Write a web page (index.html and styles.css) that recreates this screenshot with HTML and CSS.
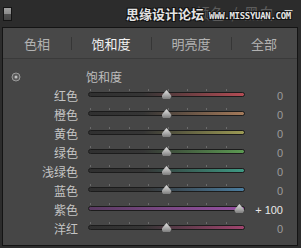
FILE: index.html
```html
<!DOCTYPE html>
<html lang="zh-CN">
<head>
    <meta charset="UTF-8">
    <title>HSL 饱和度</title>
    <link rel="stylesheet" href="styles.css">
</head>
<body>

<div class="top">
    <div class="switch"></div>
    <div class="crumbs">颜色 &nbsp;/ &nbsp;黑白</div>
    <div class="arrow">▼</div>
    <div class="mark">
        <span class="mark-cn">思缘设计论坛</span>
        <span class="mark-en">WWW.MISSYUAN.COM</span>
    </div>
</div>

<div class="panel">
    <div class="tabs">
        <div class="tab">色相</div>
        <div class="tab active">饱和度</div>
        <div class="tab">明亮度</div>
        <div class="tab">全部</div>
    </div>

    <div class="sliders">
        <div class="target">
            <svg width="10" height="10" viewBox="0 0 10 10">
                <circle cx="5" cy="5" r="4" fill="#5a5a5a" stroke="#9a9a9a" stroke-width="1"/>
                <circle cx="5" cy="5" r="1.5" fill="#c0c0c0"/>
            </svg>
        </div>
        <div class="heading">饱和度</div>
        <div></div>

        <div class="label">红色</div>
        <div class="track red"><span class="thumb" style="left: 50%"></span></div>
        <div class="value">0</div>

        <div class="label">橙色</div>
        <div class="track orange"><span class="thumb" style="left: 50%"></span></div>
        <div class="value">0</div>

        <div class="label">黄色</div>
        <div class="track yellow"><span class="thumb" style="left: 50%"></span></div>
        <div class="value">0</div>

        <div class="label">绿色</div>
        <div class="track green"><span class="thumb" style="left: 50%"></span></div>
        <div class="value">0</div>

        <div class="label">浅绿色</div>
        <div class="track aqua"><span class="thumb" style="left: 50%"></span></div>
        <div class="value">0</div>

        <div class="label">蓝色</div>
        <div class="track blue"><span class="thumb" style="left: 50%"></span></div>
        <div class="value">0</div>

        <div class="label">紫色</div>
        <div class="track purple"><span class="thumb" style="left: 97%"></span></div>
        <div class="value changed">+ 100</div>

        <div class="label">洋红</div>
        <div class="track magenta"><span class="thumb" style="left: 50%"></span></div>
        <div class="value">0</div>
    </div>
</div>

</body>
</html>
```

FILE: styles.css
```css
body {
    margin: 0;
    width: 301px;
    height: 248px;
    overflow: hidden;
    background: #2c2c2c;
    font-family: "Noto Sans CJK SC", "Noto Sans", sans-serif;
}

/* header strip */
.top {
    position: relative;
    height: 27px;
    display: flex;
    align-items: center;
}
.switch {
    width: 7px;
    height: 12px;
    margin-left: 3px;
    border: 1px solid #151515;
    background: linear-gradient(#a0a0a0 0%, #8a8a8a 50%, #505050 50%, #444 100%);
}
.crumbs {
    margin-left: auto;
    align-self: flex-start;
    margin-top: 4px;
    color: #5c5c5c;
    font-size: 15px;
    line-height: 17px;
}
.arrow {
    margin: 0 8px 0 10px;
    color: #cfcfcf;
    font-size: 9px;
    line-height: 9px;
}
.mark {
    position: absolute;
    left: 126px;
    top: 6px;
    display: flex;
    align-items: flex-end;
    gap: 5px;
    color: #e4e4e4;
    text-shadow: 1px 1px 0 #111, -1px -1px 0 #111, 1px -1px 0 #111, -1px 1px 0 #111;
}
.mark-cn {
    font-size: 13px;
    font-weight: bold;
    line-height: 16px;
}
.mark-en {
    font-family: "DejaVu Sans Mono", monospace;
    font-size: 9px;
    font-weight: bold;
    line-height: 11px;
    letter-spacing: -0.3px;
}

/* panel */
.panel {
    margin-left: 2px;
    width: 294px;
    height: 217px;
    border: 1px solid #141414;
    background: #464646;
}
.tabs {
    display: grid;
    grid-template-columns: 68px 80px 80px 1fr;
    height: 30px;
    background: #484848;
    border-bottom: 1px solid #3a3a3a;
}
.tab {
    display: flex;
    align-items: center;
    justify-content: center;
    color: #b2b2b2;
    font-size: 13px;
    position: relative;
}
.tab + .tab::before {
    content: "";
    position: absolute;
    left: 0;
    top: 9px;
    bottom: 8px;
    width: 1px;
    background: #363636;
}
.tab.active {
    color: #f2f2f2;
}

/* sliders */
.sliders {
    display: grid;
    grid-template-columns: 75px 157px 28px;
    grid-auto-rows: 19px;
    column-gap: 10px;
    align-items: center;
    padding-top: 8px;
}
.target {
    padding-left: 8px;
    height: 10px;
}
.target svg {
    display: block;
}
.heading {
    color: #bdbdbd;
    font-size: 12px;
    margin-left: -2px;
}
.label {
    text-align: right;
    color: #c4c4c4;
    font-size: 12px;
    line-height: 19px;
}
.value {
    text-align: right;
    color: #9c9c9c;
    font-family: "Liberation Sans", Arial, sans-serif;
    font-size: 11px;
}
.value.changed {
    color: #e8e8e8;
}

.track {
    position: relative;
    height: 3px;
    margin-top: -2px;
    border: 1px solid #1c1c1c;
    border-radius: 3px;
    background: linear-gradient(90deg, #303030 0%, #353535 35%, var(--hue) 100%);
}
.track::before {
    content: "";
    position: absolute;
    left: 1px;
    right: 1px;
    top: -4px;
    height: 2px;
    background: repeating-linear-gradient(90deg, #6a6a6a 0, #6a6a6a 1px, transparent 1px, transparent 19.4px);
}
.thumb {
    position: absolute;
    top: -3px;
    width: 10px;
    height: 9px;
    margin-left: -5px;
    background: linear-gradient(#e2e2e2, #a8a8a8 60%, #7c7c7c);
    clip-path: polygon(50% 0, 85% 45%, 100% 70%, 85% 100%, 15% 100%, 0 70%, 15% 45%);
}

.red { --hue: #b34c54; }
.orange { --hue: #a47a5a; }
.yellow { --hue: #9c9a54; }
.green { --hue: #5c9a52; }
.aqua { --hue: #3e9a84; }
.blue { --hue: #4a7c9e; }
.purple { background: linear-gradient(90deg, #5a3a62 0%, #7a4884 50%, #9650a2 100%); }
.magenta { --hue: #a0446e; }
```
